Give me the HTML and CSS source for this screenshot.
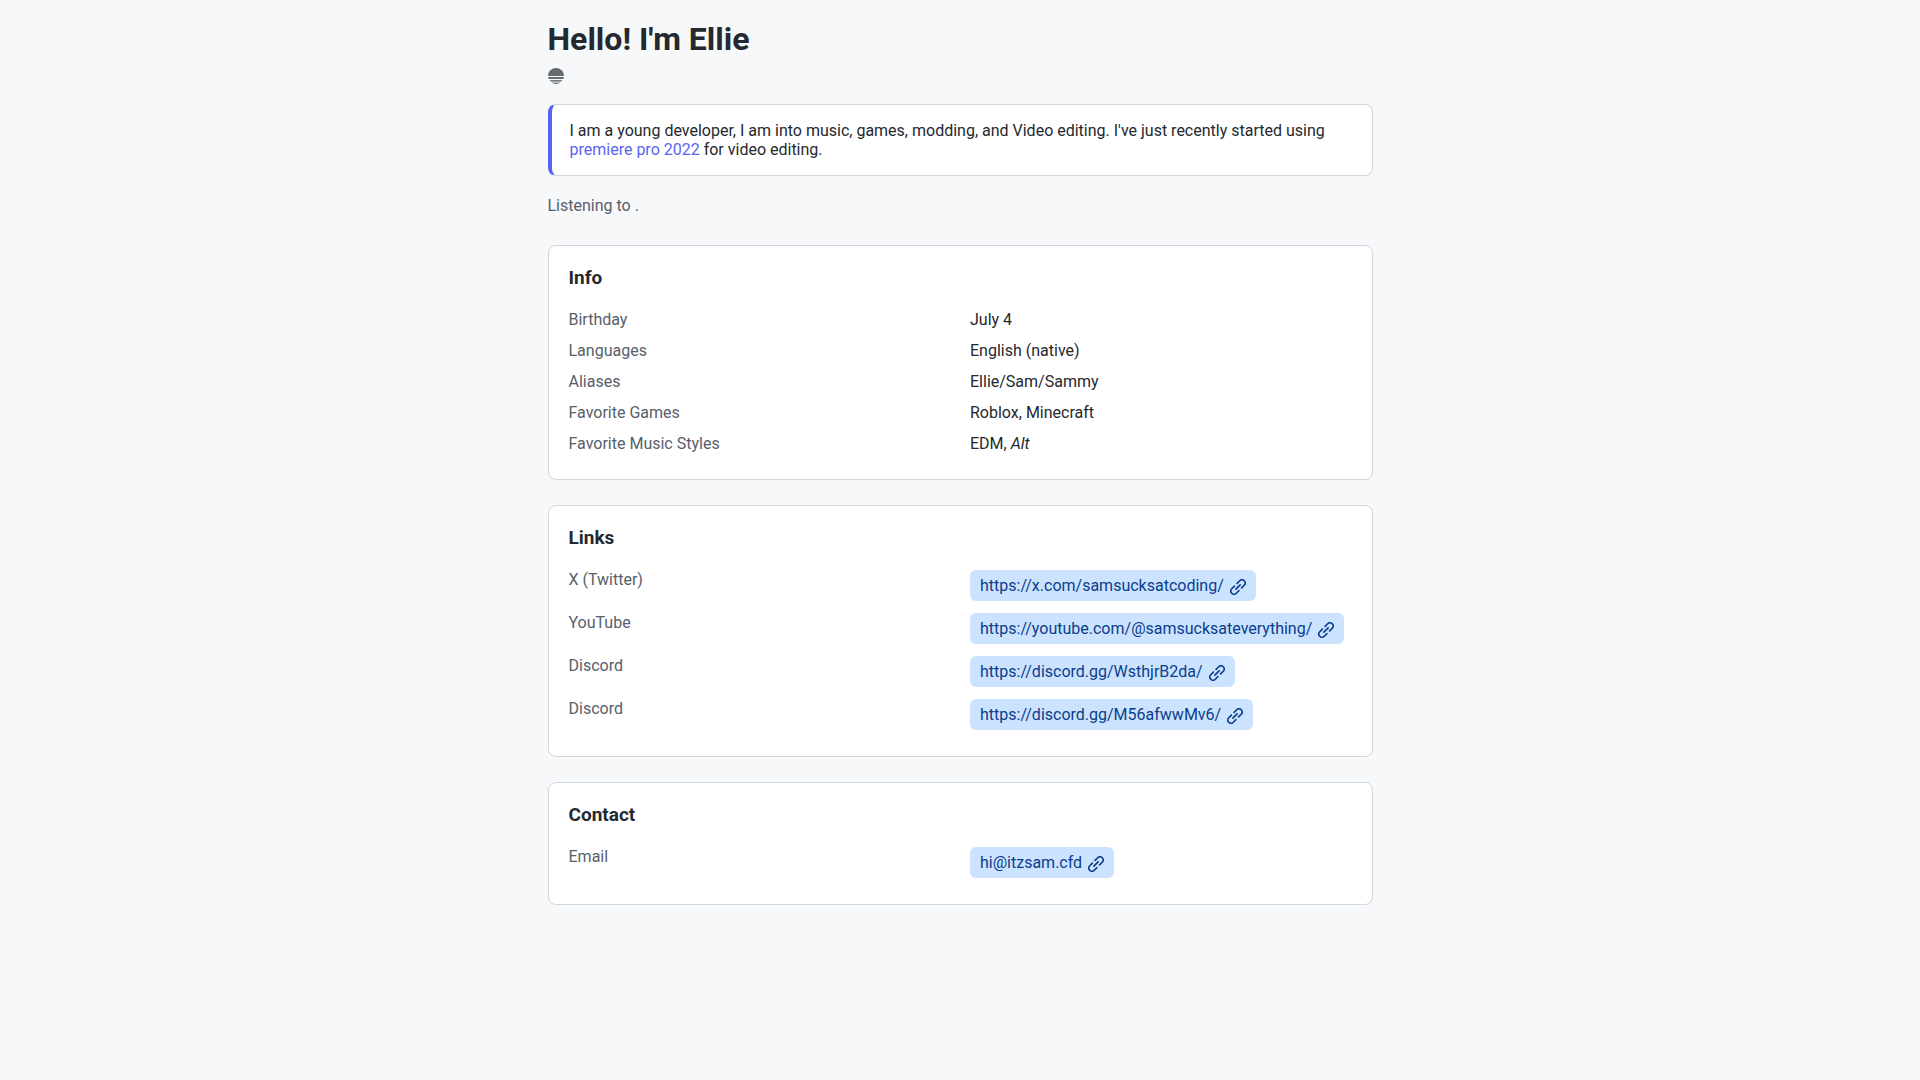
FILE: index.html
```html
<!DOCTYPE html>
<html lang="en">
<head>
<meta charset="utf-8">
<meta name="viewport" content="width=device-width, initial-scale=1">
<title>Ellie</title>
<link rel="stylesheet" href="styles.css">
</head>
<body>
<svg class="sprite">
  <symbol id="link" viewBox="0 0 16 16"><path transform="translate(8 8) rotate(-45)" fill="none" stroke="currentColor" stroke-width="1.6" stroke-linecap="round" d="M-1.9-3.2H-5.6a3.2 3.2 0 0 0 0 6.4H-1.9M1.9-3.2H5.6a3.2 3.2 0 0 1 0 6.4H1.9M-3 0H3"/></symbol>
</svg>
<main class="page">
  <header class="header">
    <h1 class="title">Hello! I'm Ellie</h1>
    <svg class="badge" viewBox="0 0 16 16" role="img" aria-label="Status">
      <path fill="#646a70" d="M0 8a8 8 0 0 1 16 0z"/>
      <path fill="#646a70" d="M0.2 9h15.6q-.2 1-.6 2H.8Q.4 10 .2 9z"/>
      <path fill="#74797e" d="M1.7 12h12.6l-.8 1h-11z"/>
      <path fill="#a4a8ac" d="M2.5 13h11l-1.5 1.5H4z"/>
      <path fill="#74797e" d="M4 14.8h8Q8 17.2 4 14.8z"/>
    </svg>
  </header>
  <p class="intro">I am a young developer, I am into music, games, modding, and Video editing. I've just recently started using <a class="intro-link" href="#">premiere pro 2022</a> for video editing.</p>
  <p class="listening">Listening to .</p>
  <section class="card">
    <h2 class="card-title">Info</h2>
    <dl class="list">
      <dt>Birthday</dt><dd>July 4</dd>
      <dt>Languages</dt><dd>English (native)</dd>
      <dt>Aliases</dt><dd>Ellie/Sam/Sammy</dd>
      <dt>Favorite Games</dt><dd>Roblox, Minecraft</dd>
      <dt>Favorite Music Styles</dt><dd>EDM, <em>Alt</em></dd>
    </dl>
  </section>
  <section class="card">
    <h2 class="card-title">Links</h2>
    <dl class="list">
      <dt>X (Twitter)</dt><dd><a class="chip" href="https://x.com/samsucksatcoding/">https://x.com/samsucksatcoding/<svg class="icon" aria-hidden="true"><use href="#link"/></svg></a></dd>
      <dt>YouTube</dt><dd><a class="chip" href="https://youtube.com/@samsucksateverything/">https://youtube.com/@samsucksateverything/<svg class="icon" aria-hidden="true"><use href="#link"/></svg></a></dd>
      <dt>Discord</dt><dd><a class="chip" href="https://discord.gg/WsthjrB2da/">https://discord.gg/WsthjrB2da/<svg class="icon" aria-hidden="true"><use href="#link"/></svg></a></dd>
      <dt>Discord</dt><dd><a class="chip" href="https://discord.gg/M56afwwMv6/">https://discord.gg/M56afwwMv6/<svg class="icon" aria-hidden="true"><use href="#link"/></svg></a></dd>
    </dl>
  </section>
  <section class="card">
    <h2 class="card-title">Contact</h2>
    <dl class="list">
      <dt>Email</dt><dd><a class="chip" href="mailto:hi@itzsam.cfd">hi@itzsam.cfd<svg class="icon" aria-hidden="true"><use href="#link"/></svg></a></dd>
    </dl>
  </section>
</main>
</body>
</html>
```
FILE: styles.css
```css
* { box-sizing: border-box; }

body {
  margin: 0;
  background: #f6f8fa;
  color: #24292f;
  font: 16px/19px Roboto, "Liberation Sans", sans-serif;
}

.sprite { display: none; }

.page {
  width: 100%;
  max-width: 865px;
  margin: 0 auto;
  padding: 20px;
}

.header { margin-bottom: 20px; }

.title {
  margin: 0 0 10px;
  font-size: 32px;
  line-height: 38px;
  font-weight: 700;
}

.badge {
  display: block;
  width: 16px;
  height: 16px;
}

.intro {
  margin: 0 0 20px;
  padding: 16px 18px;
  background: #fff;
  border: 1px solid #d0d7de;
  border-left: 4px solid #5865f2;
  border-radius: 8px;
}

.intro-link {
  color: #5865f2;
  text-decoration: none;
}

.listening {
  margin: 0 0 30px;
  color: #57606a;
}

.card {
  margin-bottom: 25px;
  padding: 20px 20px 26px;
  background: #fff;
  border: 1px solid #d0d7de;
  border-radius: 8px;
}

.card-title {
  margin: 0 0 20px;
  font-size: 19px;
  line-height: 24px;
  font-weight: 700;
}

.list {
  display: grid;
  grid-template-columns: 1fr 1fr;
  gap: 12px 20px;
  margin: 0;
}

.list dt { color: #57606a; }

.list dd { margin: 0; }

.chip {
  display: flex;
  align-items: center;
  gap: 6px;
  width: fit-content;
  padding: 6px 10px;
  background: #cce3ff;
  border-radius: 6px;
  color: #0a3d8c;
  text-decoration: none;
}

.icon {
  width: 16px;
  height: 16px;
  margin-top: 3px;
}
```
